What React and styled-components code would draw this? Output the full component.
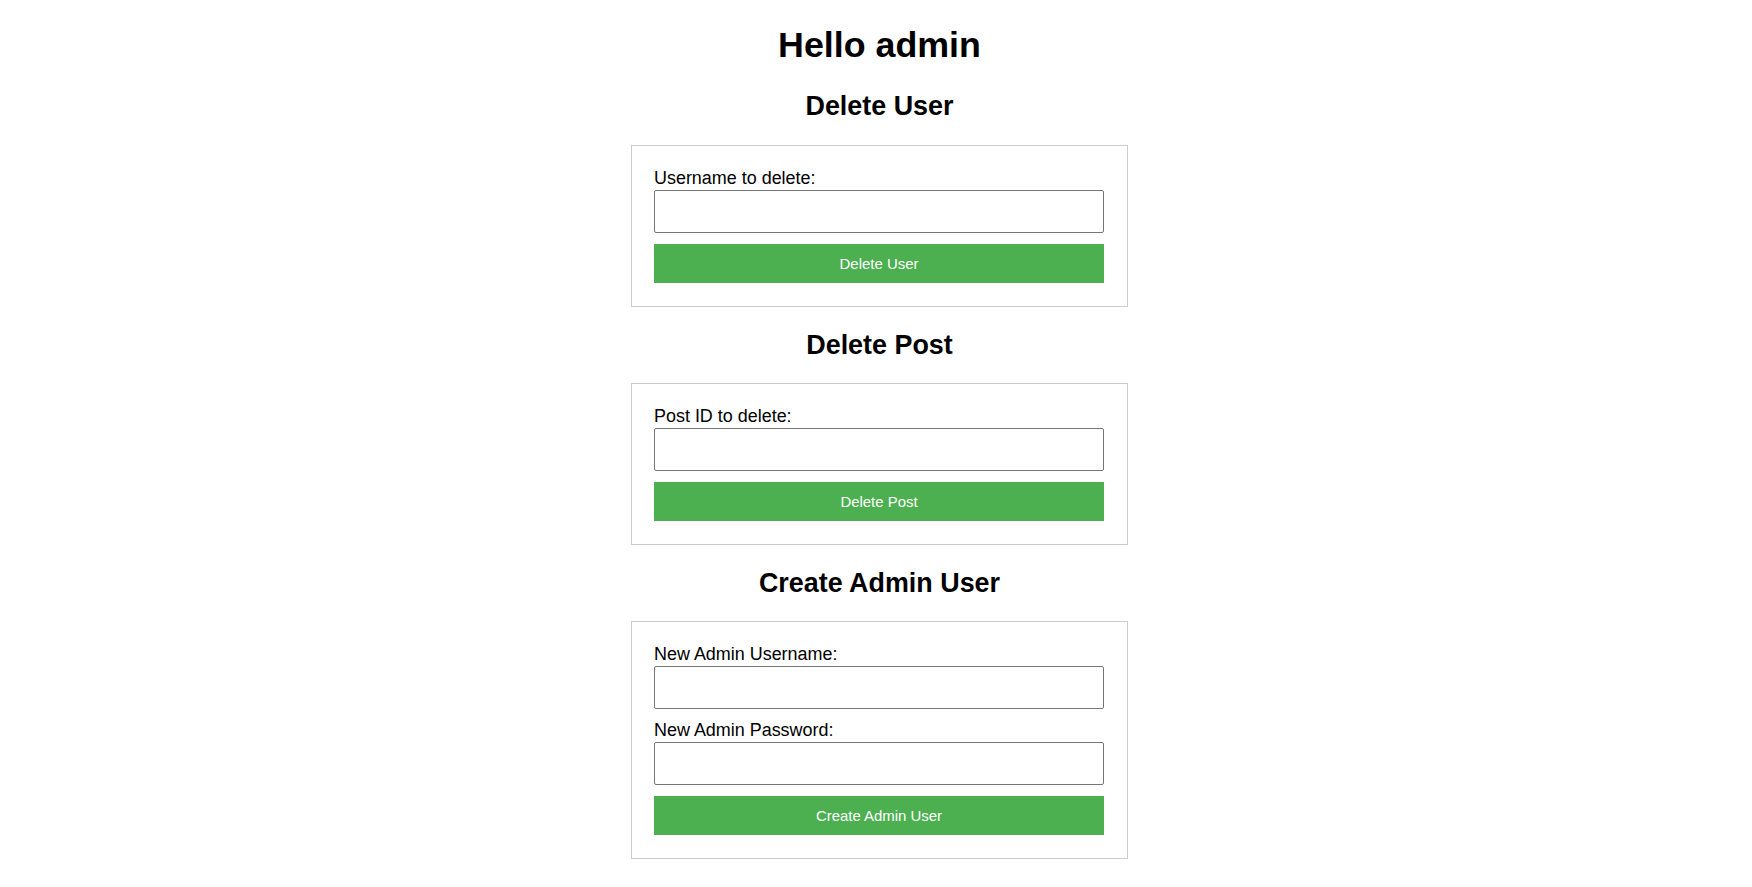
import React from "react";
import styled, { createGlobalStyle } from "styled-components";

const GlobalStyle = createGlobalStyle`
  html, body {
    margin: 0;
    padding: 0;
    background: #ffffff;
  }
  body {
    font-family: "Liberation Sans", Arial, Helvetica, sans-serif;
    color: #000000;
  }
`;

const Page = styled.main`
  display: flex;
  flex-direction: column;
  align-items: center;
  padding-left: 7px;
  padding-bottom: 28px;
`;

const Title = styled.h1`
  margin: 25px 0 0;
  font-size: 35.8px;
  line-height: 40px;
  font-weight: 700;
  text-align: center;
`;

const SectionTitle = styled.h2`
  margin: ${(p) => (p.$first ? "26px 0 24px" : "23px 0 23px")};
  font-size: 26.9px;
  line-height: 30px;
  font-weight: 700;
  text-align: center;
`;

const Form = styled.form`
  width: 450px;
  padding: 22px 23px 23px 22px;
  border: 1px solid #cccccc;
  display: flex;
  flex-direction: column;
`;

const Label = styled.label`
  display: block;
  font-size: 17.95px;
  line-height: 20px;
  margin-bottom: 2px;
`;

const Input = styled.input`
  box-sizing: border-box;
  width: 450px;
  height: 43px;
  margin: 0 0 11px;
  padding: 0 11px;
  border: 1px solid #767676;
  border-radius: 2px;
  font-family: "Liberation Sans", Arial, sans-serif;
  font-size: 14.67px;
  background: #ffffff;
  outline: none;
`;

const SubmitButton = styled.button`
  box-sizing: border-box;
  width: 450px;
  height: 39px;
  margin: 0;
  padding: 0;
  border: none;
  border-radius: 0;
  background: #4caf50;
  color: #ffffff;
  font-family: "Liberation Sans", Arial, sans-serif;
  font-size: 14.95px;
  cursor: pointer;
`;

const sections = [
  {
    title: "Delete User",
    fields: [{ id: "del-user", label: "Username to delete:", type: "text" }],
    button: "Delete User",
  },
  {
    title: "Delete Post",
    fields: [{ id: "del-post", label: "Post ID to delete:", type: "text" }],
    button: "Delete Post",
  },
  {
    title: "Create Admin User",
    fields: [
      { id: "new-admin-user", label: "New Admin Username:", type: "text" },
      { id: "new-admin-pass", label: "New Admin Password:", type: "password" },
    ],
    button: "Create Admin User",
  },
];

export default function App() {
  return (
    <>
      <GlobalStyle />
      <Page>
        <Title>Hello admin</Title>
        {sections.map((s, i) => (
          <React.Fragment key={s.title}>
            <SectionTitle $first={i === 0}>{s.title}</SectionTitle>
            <Form onSubmit={(e) => e.preventDefault()}>
              {s.fields.map((f) => (
                <React.Fragment key={f.id}>
                  <Label htmlFor={f.id}>{f.label}</Label>
                  <Input id={f.id} type={f.type} />
                </React.Fragment>
              ))}
              <SubmitButton type="submit">{s.button}</SubmitButton>
            </Form>
          </React.Fragment>
        ))}
      </Page>
    </>
  );
}
